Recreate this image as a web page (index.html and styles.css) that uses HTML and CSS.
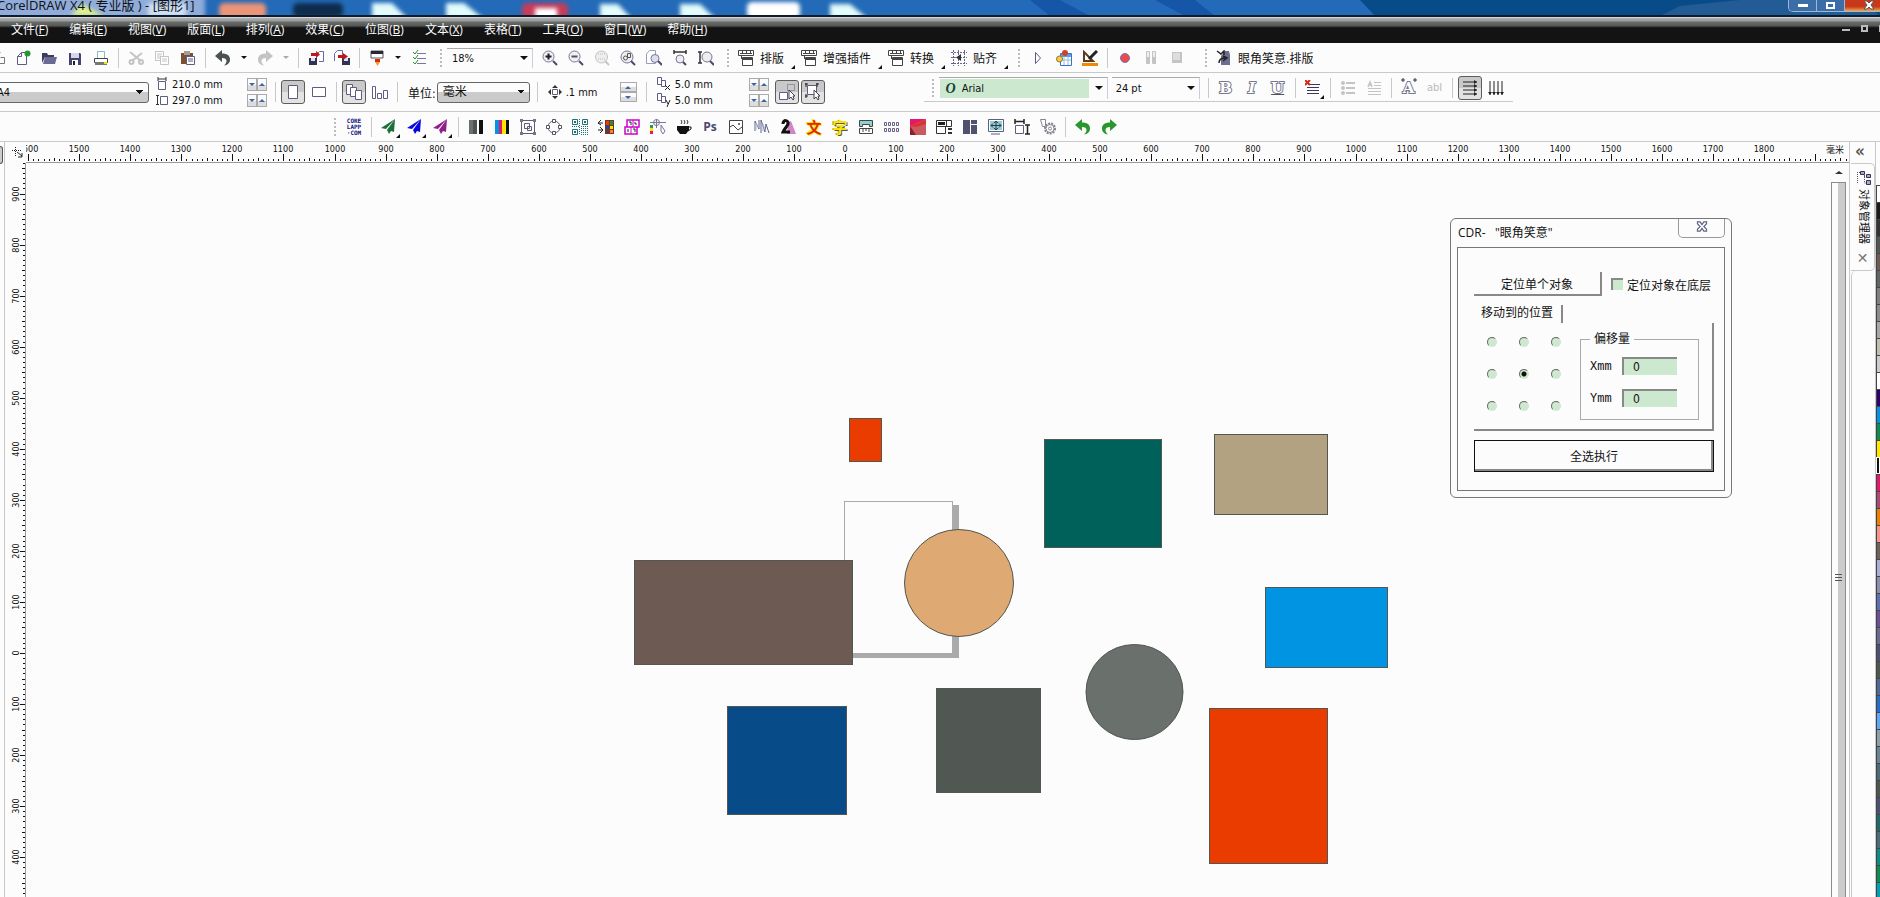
FILE: index.html
```html
<!DOCTYPE html>
<html lang="zh-CN">
<head>
    <meta charset="UTF-8">
    <meta name="viewport" content="width=device-width, initial-scale=1.0">
    <title>CorelDRAW X4</title>
    <link rel="stylesheet" href="styles.css">
</head>
<body>
    <!-- icon sprite -->
    <svg class="sprite" aria-hidden="true">
        <symbol id="clone" viewBox="0 0 16 16"><path d="M10.500 2.500h-5v11h-4M10.500 7.500h4v6h-9" transform="translate(1 0)" fill="none" stroke="#777"/></symbol>
        <symbol id="new" viewBox="0 0 16 16"><path d="M2.500 14.500V6.500l4-4h5v12z" fill="#fff" stroke="#5d5d80"/><path d="M2.500 6.500h4v-4" fill="none" stroke="#5d5d80"/><circle cx="12.500" cy="3.500" r="3" fill="#1f9a2c"/></symbol>
        <symbol id="open" viewBox="0 0 16 16"><path d="M1 13V3h5l1 2h6v2H4z" fill="#3c3c60"/><path d="M4 7h12l-2 7H2z" fill="#6c6c92"/></symbol>
        <symbol id="save" viewBox="0 0 16 16"><path d="M2 3h11l1 1v11H2z" fill="#43436f"/><path d="M4 3h8v5H4z" fill="#d5d5ee"/><path d="M5 10h6v5H5z" fill="#fff"/><path d="M6 11h2v4H6z" fill="#222"/></symbol>
        <symbol id="print" viewBox="0 0 16 16"><path d="M4.500 8V1.500h7V8" fill="#fff" stroke="#8bb"/><path d="M1.500 8.500h13v4h-13z" fill="#fff" stroke="#444"/><path d="M2 12h12v3H2z" fill="#777"/><path d="M11 12h3v2h-3z" fill="#eee000"/></symbol>
        <symbol id="cut" viewBox="0 0 16 16"><g fill="none" stroke="#c4c4c4" stroke-width="2"><path d="M2 2l11 9M14 3L4 11"/><circle cx="3.500" cy="12" r="2"/><circle cx="13" cy="12" r="2"/></g></symbol>
        <symbol id="copy" viewBox="0 0 16 16"><g fill="#fff" stroke="#c4c4c4"><path d="M1.500 1.500h8v9h-8z"/><path d="M6.500 6.500h8v8h-8z"/><path d="M3 4h5M3 6h4M3 8h3M8 9h5M8 11h5"/></g></symbol>
        <symbol id="paste" viewBox="0 0 16 16"><path d="M1 3h12v11H1z" fill="#7a5232"/><path d="M4 1h6v4H4z" fill="#a99"/><path d="M6.500 6.500h8v8h-8z" fill="#fff" stroke="#5d5d80"/><path d="M8 9h5M8 11h5" stroke="#5d5d80"/></symbol>
        <symbol id="undo" viewBox="0 0 16 16"><path d="M7 0v3.500c5 0 8 2 8 6S12 15 9 15.500c2-2 2.500-3 2.500-4.500 0-2-1.500-3-4.500-3V12L0 6z"/></symbol>
        <symbol id="redo" viewBox="0 0 16 16"><path d="M9 0v3.500c-5 0-8 2-8 6S4 15 7 15.500c-2-2-2.500-3-2.500-4.500 0-2 1.500-3 4.500-3V12l7-6z"/></symbol>
        <symbol id="import" viewBox="0 0 16 16"><path d="M8.500 9V4.500l3-3h4v10H11" fill="#fff" stroke="#66a"/><path d="M1 8h8v7H1z" fill="#33334f"/><path d="M3 8h4v3H3z" fill="#ddf"/><path d="M3 3h5V1l4 3.500L8 8V6H3z" fill="#c01818"/></symbol>
        <symbol id="export" viewBox="0 0 16 16"><path d="M.5 11V3.500l3-3h5v10" fill="#fff" stroke="#66a"/><path d="M8 8h8v7H8z" fill="#33334f"/><path d="M10 8h4v3h-4z" fill="#ddf"/><path d="M4 5h5V3l5 3.500L9 10V8H4z" fill="#c01818"/></symbol>
        <symbol id="launch" viewBox="0 0 16 16"><path d="M2 1h12v7H2z" fill="#fff" stroke="#555"/><path d="M2 1h12v3H2z" fill="#26263c"/><path d="M6 9h5v3H6z" fill="#d62a10"/><path d="M6 12h5l-2.500 4z" fill="#ff9b1f"/></symbol>
        <symbol id="checks" viewBox="0 0 16 16"><path d="M6 3.500h9M6 8.500h9M6 13.500h9" stroke="#77779a"/><path d="M2 2l2 2 3-4M2 7l2 2 3-4M2 12l2 2 3-4" fill="none" stroke="#258c2f"/></symbol>
        <symbol id="zoomin" viewBox="0 0 16 16"><circle cx="6.500" cy="6.500" r="5.500" fill="#f1f1f5" stroke="#77779a"/><path d="M11 11l4 4" stroke="#4a4a66" stroke-width="2"/><path d="M3.500 6.500h6M6.500 3.500v6" stroke="#222" stroke-width="2"/></symbol>
        <symbol id="zoomout" viewBox="0 0 16 16"><circle cx="6.500" cy="6.500" r="5.500" fill="#f1f1f5" stroke="#77779a"/><path d="M11 11l4 4" stroke="#4a4a66" stroke-width="2"/><path d="M3.500 6.500h6" stroke="#555" stroke-width="2"/></symbol>
        <symbol id="zoomsel" viewBox="0 0 16 16"><circle cx="7.500" cy="7" r="6" fill="#eee" stroke="#c4c4c4"/><path d="M11 11l4 4" stroke="#c4c4c4" stroke-width="2"/><path d="M4 4h7M4 9h7" stroke="#bbb" stroke-dasharray="1 1"/></symbol>
        <symbol id="zoomall" viewBox="0 0 16 16"><circle cx="7" cy="7" r="6" fill="#eee" stroke="#77779a"/><path d="M11 11l4 4" stroke="#4a4a66" stroke-width="2"/><path d="M7.500 3.500h3v4h-3z" fill="none" stroke="#555"/><circle cx="5.500" cy="8" r="2" fill="none" stroke="#555"/></symbol>
        <symbol id="zoompage" viewBox="0 0 16 16"><path d="M.5 13.500V4l3-3.500h6v13z" fill="#fff" stroke="#9b9bbb"/><circle cx="9" cy="8.500" r="4" fill="#dde" stroke="#77779a"/><path d="M12 11l4 4" stroke="#4a4a66" stroke-width="2"/></symbol>
        <symbol id="zoomw" viewBox="0 0 16 16"><path d="M2 0v4M14 0v4M2 2h12" stroke="#333" stroke-width="1.500"/><circle cx="8" cy="9" r="4" fill="#eee" stroke="#77779a"/><path d="M11 12l3 3" stroke="#4a4a66" stroke-width="2"/></symbol>
        <symbol id="zoomh" viewBox="0 0 16 16"><path d="M0 2h4M0 13h4M2 2v11" stroke="#333" stroke-width="1.500"/><circle cx="9" cy="7" r="5" fill="#eee" stroke="#77779a"/><path d="M12 11l4 4" stroke="#4a4a66" stroke-width="2"/></symbol>
        <symbol id="macro" viewBox="0 0 16 16"><path d="M.5.5h15v5H.5z" fill="#fff" stroke="#444"/><path d="M4.500 0v3M8.500 0v3M12.500 0v3M2 3.500h12M3.500 6v3" stroke="#444"/><path d="M4.500 7.500h10v8h-10z" fill="#fff" stroke="#444"/><path d="M4 9h11" stroke="#444" stroke-width="2"/></symbol>
        <symbol id="snap" viewBox="0 0 16 16"><path d="M0 2.500h16M0 7.500h16M0 13.500h16M2.500 0v16M7.500 0v16M13.500 0v16" stroke="#66668a" stroke-dasharray="2 1"/><path d="M10 4v7L5 7.500z" fill="#333"/></symbol>
        <symbol id="play" viewBox="0 0 16 16"><path d="M5.500 2.500v11l5-5.500z" fill="#fff" stroke="#5d5d80"/></symbol>
        <symbol id="calendar" viewBox="0 0 16 16"><path d="M4.500 3.500h11v12h-11z" fill="#fff" stroke="#3474c8"/><path d="M5 4h10v3H5z" fill="#58a0e8"/><path d="M5 10h10M8 7v8M12 7v8" stroke="#9bd"/><circle cx="3.500" cy="9" r="3" fill="#f0ce52" stroke="#96751d"/><circle cx="9" cy="3" r="3" fill="#d3402a"/></symbol>
        <symbol id="design" viewBox="0 0 16 16"><path d="M2 2v9h9z" fill="none" stroke="#5c3a20" stroke-width="2"/><path d="M15 1L7 9" stroke="#222" stroke-width="3"/><path d="M0 13h16v3H0z" fill="#f08a00"/></symbol>
        <symbol id="record" viewBox="0 0 16 16"><circle cx="8" cy="8" r="4.500" fill="#ea4b4b" stroke="#7474b0"/></symbol>
        <symbol id="pause" viewBox="0 0 16 16"><path d="M3.500 1.500h3v12h-3zM9.500 1.500h3v12h-3z" fill="#eee" stroke="#c4c4c4"/><path d="M4 7h3v7H4zM10 7h3v7h-3z" fill="#c4c4c4"/></symbol>
        <symbol id="stop" viewBox="0 0 16 16"><path d="M3 2h10v11H3z" fill="#c4c4c4"/><path d="M4 3h7v7H4z" fill="#ddd"/></symbol>
        <symbol id="eye" viewBox="0 0 16 16"><path d="M5 15V6l4-5h4l1 4v10z" fill="#6d6d91"/><path d="M1 1l4 3 3-3v4M3 13c0-4 2-5 6-5M7 6l4 2-4 3" fill="none" stroke="#222" stroke-width="1.500"/></symbol>

        <symbol id="pw" viewBox="0 0 12 14"><path d="M2 0v4M10 0v4M2 2h8" stroke="#333"/><path d="M2.500 4.500h7v8h-7z" fill="#fff" stroke="#5d5d80"/></symbol>
        <symbol id="ph" viewBox="0 0 12 14"><path d="M0 2.500h3M0 11.500h3M1.500 2v10" stroke="#333"/><path d="M4.500 3.500h7v8h-7z" fill="#fff" stroke="#5d5d80"/></symbol>
        <symbol id="portrait" viewBox="0 0 16 16"><path d="M3.500 1.500h9v13h-9z" fill="#fff" stroke="#5d5d80"/></symbol>
        <symbol id="landscape" viewBox="0 0 16 16"><path d="M1.500 3.500h13v9h-13z" fill="#fff" stroke="#5d5d80"/></symbol>
        <symbol id="pages" viewBox="0 0 16 16"><g fill="#fff" stroke="#5d5d80"><path d="M.5.5h6v10h-6z"/><path d="M4.500 3.500h6v9h-6z"/><path d="M9.500 6.500h6v9h-6z"/></g></symbol>
        <symbol id="page1" viewBox="0 0 16 16"><path d="M.5 2.500h3v12h-3zM5.500 9.500h4v5h-4zM11.500 6.500h4v8h-4z" fill="#fff" stroke="#5d5d80"/></symbol>
        <symbol id="nudge" viewBox="0 0 14 14"><path d="M4.500 4.500h5v5h-5z" fill="#fff" stroke="#5d5d80"/><path d="M4 3l3-3 3 3zM4 11l3 3 3-3zM3 4L0 7l3 3zM11 4l3 3-3 3z" fill="#333"/></symbol>
        <symbol id="dupx" viewBox="0 0 14 14"><path d="M.5.5h4v7h-4zM4.500 3.500h4v6h-4z" fill="#fff" stroke="#5d5d80"/><path d="M8 8l5 5M13 8l-5 5" stroke="#222"/></symbol>
        <symbol id="dupy" viewBox="0 0 14 14"><path d="M.5.5h4v7h-4zM4.500 3.500h4v6h-4z" fill="#fff" stroke="#5d5d80"/><path d="M9 7l2 4M13 7l-3 7" stroke="#222"/></symbol>
        <symbol id="treat" viewBox="0 0 18 18"><path d="M1.500 9.500h8v7h-8z" fill="#fff" stroke="#5d5d80"/><path d="M9.500 1.500h7v6h-7z" fill="none" stroke="#5d5d80" stroke-dasharray="1 1"/><path d="M11 7v9l2-2 2 3 1-1-1-3h2z" fill="#fff" stroke="#445"/></symbol>
        <symbol id="group-sel" viewBox="0 0 18 18"><path d="M3.500 2.500h9v9h-9z" fill="#fff" stroke="#5d5d80"/><path d="M1 1h3M12 1h3M1 13h3M2 0v4M13 0v4M2 11v4" stroke="#222"/><path d="M10 7v9l2-2 2 3 1-1-1-3h2z" fill="#fff" stroke="#445"/></symbol>
        <symbol id="noalign" viewBox="0 0 16 16"><path d="M3 4.500h12M2 7.500h12M2 10.500h12M2 13.500h12" stroke="#3a3a58"/><path d="M0 0l5 5M5 0L0 5" stroke="#d62a10" stroke-width="2"/></symbol>
        <symbol id="bullets" viewBox="0 0 16 16"><path d="M6 3h9M6 8h9M6 13h9" stroke="#c4c4c4" stroke-width="2"/><circle cx="3" cy="3" r="2" fill="#c4c4c4"/><circle cx="3" cy="8" r="2" fill="#c4c4c4"/><circle cx="3" cy="13" r="2" fill="#c4c4c4"/></symbol>
        <symbol id="dropcap" viewBox="0 0 16 16"><path d="M8 2.500h7M8 5.500h7M2 8.500h13M2 11.500h13M2 14.500h13" stroke="#c4c4c4"/><path d="M2 7l2-5 2 5M3 5h3" fill="none" stroke="#c4c4c4" stroke-width="1.500"/></symbol>
        <symbol id="charfmt" viewBox="0 0 16 16"><path d="M0 2h4M2 0v4M12 2h4M14 0v4" stroke="#33334f"/></symbol>
        <symbol id="htext" viewBox="0 0 18 18"><path d="M2 3h14M2 7h14M2 11h14M2 15h14" stroke="#222"/><path d="M13 1l3 2-3 2zM13 5l3 2-3 2zM13 9l3 2-3 2zM13 13l3 2-3 2z" fill="#222"/></symbol>
        <symbol id="vtext" viewBox="0 0 18 18"><path d="M3 2v14M7 2v14M11 2v14M15 2v14" stroke="#222"/><path d="M1 13l2 3 2-3zM5 13l2 3 2-3zM9 13l2 3 2-3zM13 13l2 3 2-3z" fill="#222"/></symbol>

        <symbol id="plane" viewBox="0 0 16 16"><path d="M14 0L0 9l5 1zM14 0L6 11l2 4 2-3 3 1z"/></symbol>
        <symbol id="bars" viewBox="0 0 16 16"><path d="M1 1h7v14H1z" fill="#6a706d"/><path d="M5 1h4v14H5z" fill="#4d534f"/><path d="M11 1h4v14h-4z" fill="#111"/></symbol>
        <symbol id="cmyk" viewBox="0 0 16 16"><path d="M1 1h4v14H1z" fill="#0094e3"/><path d="M5 1h3v14H5z" fill="#e3186c"/><path d="M8 1h4v14H8z" fill="#ffe600"/><path d="M12 1h3v14h-3z" fill="#111"/></symbol>
        <symbol id="groupbox" viewBox="0 0 16 16"><g fill="none" stroke="#5d5d80"><path d="M1.500 1.500h13v13h-13zM4.500 4.500h5v5h-5zM7.500 7.500h4v4h-4z"/></g><path d="M0 0h3v3H0zM13 0h3v3h-3zM0 13h3v3H0zM13 13h3v3h-3z" fill="#777"/></symbol>
        <symbol id="nodes" viewBox="0 0 16 16"><circle cx="8" cy="8" r="6" fill="none" stroke="#5d5d80"/><g fill="#fff" stroke="#555"><path d="M6.500.5h3v3h-3zM6.500 12.500h3v3h-3zM.5 6.500h3v3h-3zM12.500 6.500h3v3h-3z"/></g></symbol>
        <symbol id="qr" viewBox="0 0 16 16"><g fill="none" stroke="#1a7575"><path d="M.5.5h5v5h-5zM10.500.5h5v5h-5zM.5 10.500h5v5h-5z"/><path d="M7.500 0v16M9 7.500h7M0 7.500h7M9 9.500h7M9 11.500h7M9 13.500h7M9 15.500h7" stroke-dasharray="1 1"/></g><path d="M2 2h2v2H2zM12 2h2v2h-2zM2 12h2v2H2z" fill="#1a7575"/></symbol>
        <symbol id="swap" viewBox="0 0 16 16"><path d="M0 4h5M3 1L0 4l3 2M0 11h5M2 8l3 3-3 3" fill="none" stroke="#222"/><path d="M7 1h9v14H7z" fill="#753622"/><path d="M8 2h3v4H8z" fill="#e83e00"/><path d="M12 2h3v4h-3z" fill="#2a8f38"/><path d="M8 7h3v3H8z" fill="#1a44bd"/><path d="M12 7h3v3h-3z" fill="#ffe200"/><path d="M12 11h3v3h-3z" fill="#f5842a"/></symbol>
        <symbol id="numbers" viewBox="0 0 16 16"><path d="M3 1h12v7H3zM1 8h12v7H1z" fill="#fff" stroke="#d000d0" stroke-width="1.500"/><path d="M9 1v7M7 8v7" stroke="#d000d0"/><path d="M5 3h2v3M11 3v2h2M4 10v3M9 10h2v3" fill="none" stroke="#222"/></symbol>
        <symbol id="guides" viewBox="0 0 16 16"><path d="M0 3.500h16M6.500 0v9" stroke="#77779a"/><circle cx="6.500" cy="3.500" r="3" fill="none" stroke="#77779a"/><path d="M0 6h3v3H0z" fill="#2a9d38"/><path d="M0 9h3v3H0z" fill="#ffe200"/><path d="M0 12h3v3H0z" fill="#e3186c"/><path d="M11 6l4 6-2 3-2-3z" fill="#fff" stroke="#77779a"/></symbol>
        <symbol id="coffee" viewBox="0 0 16 16"><path d="M1 7h12v4l-3 4H4l-3-4z" fill="#111"/><path d="M12 8h3v2l-3 2" fill="none" stroke="#111"/><path d="M5 5l1-2-1-2M8 5l1-2-1-2M11 5l1-2-1-2" fill="none" stroke="#333"/></symbol>
        <symbol id="photo" viewBox="0 0 16 16"><path d="M1.500 1.500h13v13h-13z" fill="#fff" stroke="#444"/><path d="M2 8l3-2 5 5 4-3" fill="none" stroke="#444"/><circle cx="11" cy="5" r="1" fill="#444"/></symbol>
        <symbol id="mirror" viewBox="0 0 16 16"><path d="M1 12V2l4 8V1M7 14V1l4 12 1-8 3 9" fill="none" stroke="#5f6688"/><path d="M2 11V4l3 5M9 12V5l3 8" stroke="#a9b3d4" fill="none"/></symbol>
        <symbol id="two" viewBox="0 0 16 16"><path d="M8 4l3-2 5 13H7z" fill="#ce86c6"/><path d="M3 5c0-5 6-4 5 0-1 3-4 5-5 8h7" fill="none" stroke="#111" stroke-width="3"/></symbol>
        <symbol id="widths" viewBox="0 0 16 16"><path d="M1.500 1.500h13v6h-3v-2h-7v2h-3z" fill="#8fd0d0" stroke="#444"/><path d="M1.500 9.500h13v5h-13z" fill="#fff" stroke="#444"/><path d="M5 10v3M8 10v2M11 10v3" stroke="#444"/></symbol>
        <symbol id="matrix" viewBox="0 0 16 16"><path d="M.5 3.500h2v3h-2zM4.500 3.500h2v3h-2zM8.500 3.500h2v3h-2zM12.500 3.500h2v3h-2zM.5 9.500h2v3h-2zM4.500 9.500h2v3h-2zM8.500 9.500h2v3h-2zM12.500 9.500h2v3h-2z" fill="none" stroke="#6b5f86"/></symbol>
        <symbol id="redbox" viewBox="0 0 16 16"><path d="M0 0h16v16H0z" fill="#c85a62"/><path d="M0 0h16L0 7z" fill="#e3186c"/><path d="M0 7L16 1v4L6 8z" fill="#e0302c"/><path d="M0 7l6 9H0z" fill="#8f1f22"/></symbol>
        <symbol id="panels" viewBox="0 0 16 16"><path d="M.5 1.500h15v6H.5zM.5 7.500h9v7h-9zM10.500 1.500v6" fill="#fff" stroke="#333"/><path d="M2 3h7v3H2z" fill="#222"/><path d="M12 10h4M12 14h4" stroke="#333" stroke-width="2"/></symbol>
        <symbol id="blocks" viewBox="0 0 16 16"><path d="M1 1h7v14H1zM9 1h6v4H9zM9 6h6v9H9z" fill="#50506f"/></symbol>
        <symbol id="screen" viewBox="0 0 16 16"><path d="M.5.5h15v12H.5z" fill="#fff" stroke="#5d5d80"/><path d="M2 2h12v9H2z" fill="#8fd0d0"/><path d="M3 6.500h10M8 2v9M5 4.500L3 6.500l2 2M11 4.500l2 2-2 2M6 4l2-2 2 2M6 9l2 2 2-2" fill="none" stroke="#33334f"/><path d="M3 15h9" stroke="#5d5d80"/></symbol>
        <symbol id="measure" viewBox="0 0 16 16"><path d="M1 0v5M10 0v5M1 2.500h9M11 6h5M11 15h5M13.500 6v9" stroke="#222" stroke-width="1.500"/><path d="M1.500 6.500h8v8h-8z" fill="#fff" stroke="#5d5d80"/></symbol>
        <symbol id="gear" viewBox="0 0 16 16"><circle cx="10" cy="9.500" r="5" fill="none" stroke="#85858f" stroke-width="2" stroke-dasharray="2 1"/><circle cx="10" cy="9.500" r="4" fill="#fff" stroke="#85858f"/><circle cx="10" cy="9.500" r="1.500" fill="none" stroke="#85858f"/><path d="M.5.5h5v7h-3z" fill="#fff" stroke="#85858f"/></symbol>
        <symbol id="tree" viewBox="0 0 16 14"><path d="M2.500 3v10M2 1.500h5M9.500 4v8h3M9 5.500h3" fill="none" stroke="#555" stroke-dasharray="1 1"/><path d="M5.500.5h4v3h-4zM11.500 3.500h4v3h-4zM11.500 9.500h4v4h-4z" fill="#aac" stroke="#335"/></symbol>
        <symbol id="origin" viewBox="0 0 12 12"><path d="M3.500 0v10M0 3.500h10" stroke="#222" stroke-dasharray="1 1"/><path d="M5 5l5 4M10 6v4H6" fill="none" stroke="#222"/></symbol>
    </svg>

    <header class="titlebar">
        <svg class="glass" aria-hidden="true">
            <path d="M1360 0h520v16h-505z" fill="#074c88"/>
            <path d="M1660 16l20-10 60-6h120l20 16z" fill="#235b95"/>
            <path d="M1030 0h30l30 16h-40zM1155 0h40l20 16h-30z" fill="#1656a8"/>
            <g class="glow">
                <rect x="-20" y="-6" width="225" height="26" fill="#8facdb"/>
                <path d="M70 16l12-12 22 12z" fill="#dff28a"/>
                <rect x="148" y="3" width="38" height="14" fill="#cfe0f5"/>
                <rect x="219" y="3" width="47" height="16" rx="5" fill="#ec9478"/>
                <rect x="293" y="3" width="50" height="14" rx="5" fill="#0e2c4c"/>
                <path d="M372 3h20l16 16h-36zM446 3h18l20 16h-38zM600 4h18l14 15h-32zM680 4h20l16 15h-36zM830 4h20l18 15h-38z" fill="#e2fbfb"/>
                <rect x="522" y="3" width="46" height="16" rx="5" fill="#c83c58"/>
                <rect x="535" y="8" width="22" height="12" fill="#fff"/>
                <rect x="747" y="2" width="53" height="17" rx="5" fill="#fff"/>
            </g>
        </svg>
        <h1>CorelDRAW X4 ( 专业版 ) - [图形1]</h1>
        <div class="window-buttons">
            <button type="button" aria-label="最小化"><i class="min"></i></button>
            <button type="button" aria-label="还原"><i class="restore"></i></button>
            <button type="button" class="close" aria-label="关闭"><svg viewBox="0 0 12 9"><path d="M1 0h3l2 2 2-2h3L8 4l3 4H8L6 6 4 8H1l3-4z"/></svg></button>
        </div>
    </header>

    <nav class="menubar">
        <a href="#">文件(<u>F</u>)</a>
        <a href="#">编辑(<u>E</u>)</a>
        <a href="#">视图(<u>V</u>)</a>
        <a href="#">版面(<u>L</u>)</a>
        <a href="#">排列(<u>A</u>)</a>
        <a href="#">效果(<u>C</u>)</a>
        <a href="#">位图(<u>B</u>)</a>
        <a href="#">文本(<u>X</u>)</a>
        <a href="#">表格(<u>T</u>)</a>
        <a href="#">工具(<u>O</u>)</a>
        <a href="#">窗口(<u>W</u>)</a>
        <a href="#">帮助(<u>H</u>)</a>
        <div class="doc-buttons"><i class="min"></i><i class="restore"></i><i class="edge"></i></div>
    </nav>

    <div class="toolbar standard">
        <button type="button" class="tool" aria-label="克隆"><svg><use href="#clone"/></svg></button>
        <button type="button" class="tool" aria-label="新建"><svg><use href="#new"/></svg></button>
        <button type="button" class="tool" aria-label="打开"><svg><use href="#open"/></svg></button>
        <button type="button" class="tool" aria-label="保存"><svg><use href="#save"/></svg></button>
        <button type="button" class="tool" aria-label="打印"><svg><use href="#print"/></svg></button>
        <span class="sep"></span>
        <button type="button" class="tool" aria-label="剪切"><svg><use href="#cut"/></svg></button>
        <button type="button" class="tool" aria-label="复制"><svg><use href="#copy"/></svg></button>
        <button type="button" class="tool" aria-label="粘贴"><svg><use href="#paste"/></svg></button>
        <span class="sep"></span>
        <button type="button" class="tool dark" aria-label="撤消"><svg><use href="#undo"/></svg></button>
        <button type="button" class="drop" aria-label="撤消列表"></button>
        <button type="button" class="tool off" aria-label="重做"><svg><use href="#redo"/></svg></button>
        <button type="button" class="drop off" aria-label="重做列表"></button>
        <span class="sep"></span>
        <button type="button" class="tool" aria-label="导入"><svg><use href="#import"/></svg></button>
        <button type="button" class="tool" aria-label="导出"><svg><use href="#export"/></svg></button>
        <span class="sep"></span>
        <button type="button" class="tool" aria-label="启动器"><svg><use href="#launch"/></svg></button>
        <button type="button" class="drop" aria-label="启动器列表"></button>
        <button type="button" class="tool" aria-label="选项"><svg><use href="#checks"/></svg></button>
        <span class="grip"></span>
        <span class="combo zoom-level"><select aria-label="缩放级别"><option>18%</option></select></span>
        <button type="button" class="tool" aria-label="放大"><svg><use href="#zoomin"/></svg></button>
        <button type="button" class="tool" aria-label="缩小"><svg><use href="#zoomout"/></svg></button>
        <button type="button" class="tool" aria-label="缩放选定"><svg><use href="#zoomsel"/></svg></button>
        <button type="button" class="tool" aria-label="缩放全部"><svg><use href="#zoomall"/></svg></button>
        <button type="button" class="tool" aria-label="缩放页面"><svg><use href="#zoompage"/></svg></button>
        <button type="button" class="tool" aria-label="缩放页宽"><svg><use href="#zoomw"/></svg></button>
        <button type="button" class="tool" aria-label="缩放页高"><svg><use href="#zoomh"/></svg></button>
        <span class="grip"></span>
        <button type="button" class="text-tool more"><svg><use href="#macro"/></svg>排版</button>
        <button type="button" class="text-tool more"><svg><use href="#macro"/></svg>增强插件</button>
        <button type="button" class="text-tool more"><svg><use href="#macro"/></svg>转换</button>
        <button type="button" class="text-tool more"><svg><use href="#snap"/></svg>贴齐</button>
        <span class="grip"></span>
        <button type="button" class="tool" aria-label="运行"><svg><use href="#play"/></svg></button>
        <button type="button" class="tool" aria-label="宏"><svg><use href="#calendar"/></svg></button>
        <button type="button" class="tool" aria-label="设计"><svg><use href="#design"/></svg></button>
        <span class="sep"></span>
        <button type="button" class="tool" aria-label="录制"><svg><use href="#record"/></svg></button>
        <button type="button" class="tool" aria-label="暂停"><svg><use href="#pause"/></svg></button>
        <button type="button" class="tool" aria-label="停止"><svg><use href="#stop"/></svg></button>
        <span class="grip wide"></span>
        <button type="button" class="text-tool"><svg><use href="#eye"/></svg>眼角笑意.排版</button>
    </div>

    <div class="toolbar property">
        <select class="list paper" aria-label="纸张"><option>A4</option></select>
        <div class="pair size">
            <label><svg><use href="#pw"/></svg><input type="text" value="210.0 mm" aria-label="宽度"></label>
            <span class="steps"><button type="button" class="down" aria-label="减"></button><button type="button" class="up" aria-label="加"></button></span>
            <label><svg><use href="#ph"/></svg><input type="text" value="297.0 mm" aria-label="高度"></label>
            <span class="steps"><button type="button" class="down" aria-label="减"></button><button type="button" class="up" aria-label="加"></button></span>
        </div>
        <span class="sep"></span>
        <button type="button" class="tool pressed" aria-label="纵向"><svg><use href="#portrait"/></svg></button>
        <button type="button" class="tool" aria-label="横向"><svg><use href="#landscape"/></svg></button>
        <span class="sep"></span>
        <button type="button" class="tool pressed" aria-label="全部页"><svg><use href="#pages"/></svg></button>
        <button type="button" class="tool" aria-label="当前页"><svg><use href="#page1"/></svg></button>
        <span class="sep"></span>
        <label class="unit">单位: <select class="list"><option>毫米</option></select></label>
        <span class="sep"></span>
        <div class="nudge">
            <label><svg><use href="#nudge"/></svg><input type="text" value=".1 mm" aria-label="微调"></label>
            <span class="steps tall"><button type="button" class="up" aria-label="加"></button><button type="button" class="down" aria-label="减"></button></span>
        </div>
        <span class="sep"></span>
        <div class="pair copy">
            <label><svg><use href="#dupx"/></svg><input type="text" value="5.0 mm" aria-label="X 再制距离"></label>
            <span class="steps"><button type="button" class="down" aria-label="减"></button><button type="button" class="up" aria-label="加"></button></span>
            <label><svg><use href="#dupy"/></svg><input type="text" value="5.0 mm" aria-label="Y 再制距离"></label>
            <span class="steps"><button type="button" class="down" aria-label="减"></button><button type="button" class="up" aria-label="加"></button></span>
        </div>
        <button type="button" class="tool pressed big" aria-label="视为已填充"><svg><use href="#treat"/></svg></button>
        <button type="button" class="tool pressed big" aria-label="框选"><svg><use href="#group-sel"/></svg></button>

        <div class="textbar">
            <span class="grip"></span>
            <span class="combo font-name"><b>O</b><select aria-label="字体"><option>Arial</option></select></span>
            <span class="combo font-size"><select aria-label="字号"><option>24 pt</option></select></span>
            <span class="sep"></span>
            <button type="button" class="tool letter"><b>B</b></button>
            <button type="button" class="tool letter"><i>I</i></button>
            <button type="button" class="tool letter"><u>U</u></button>
            <span class="sep"></span>
            <button type="button" class="tool more" aria-label="对齐"><svg><use href="#noalign"/></svg></button>
            <span class="sep"></span>
            <button type="button" class="tool" aria-label="项目符号"><svg><use href="#bullets"/></svg></button>
            <button type="button" class="tool" aria-label="首字下沉"><svg><use href="#dropcap"/></svg></button>
            <span class="sep"></span>
            <button type="button" class="tool letter format">A<svg><use href="#charfmt"/></svg></button>
            <button type="button" class="tool edit">abI</button>
            <span class="sep"></span>
            <button type="button" class="tool pressed big" aria-label="水平文本"><svg><use href="#htext"/></svg></button>
            <button type="button" class="tool big" aria-label="垂直文本"><svg><use href="#vtext"/></svg></button>
        </div>
    </div>

    <div class="toolbar plugins">
        <span class="grip"></span>
        <button type="button" class="tool core">CORE<br>LAPP<br>·COM</button>
        <span class="sep"></span>
        <button type="button" class="tool more green" aria-label="绿色工具"><svg><use href="#plane"/></svg></button>
        <button type="button" class="tool more blue" aria-label="蓝色工具"><svg><use href="#plane"/></svg></button>
        <button type="button" class="tool more purple" aria-label="紫色工具"><svg><use href="#plane"/></svg></button>
        <span class="sep"></span>
        <button type="button" class="tool" aria-label="灰度"><svg><use href="#bars"/></svg></button>
        <button type="button" class="tool" aria-label="CMYK"><svg><use href="#cmyk"/></svg></button>
        <button type="button" class="tool" aria-label="群组"><svg><use href="#groupbox"/></svg></button>
        <button type="button" class="tool" aria-label="节点"><svg><use href="#nodes"/></svg></button>
        <button type="button" class="tool" aria-label="二维码"><svg><use href="#qr"/></svg></button>
        <button type="button" class="tool" aria-label="替换颜色"><svg><use href="#swap"/></svg></button>
        <button type="button" class="tool" aria-label="编号"><svg><use href="#numbers"/></svg></button>
        <button type="button" class="tool" aria-label="辅助线"><svg><use href="#guides"/></svg></button>
        <button type="button" class="tool" aria-label="咖啡"><svg><use href="#coffee"/></svg></button>
        <button type="button" class="tool ps">Ps</button>
        <button type="button" class="tool" aria-label="位图"><svg><use href="#photo"/></svg></button>
        <button type="button" class="tool" aria-label="镜像"><svg><use href="#mirror"/></svg></button>
        <button type="button" class="tool" aria-label="二"><svg><use href="#two"/></svg></button>
        <button type="button" class="tool wen">文</button>
        <button type="button" class="tool zi">字</button>
        <button type="button" class="tool" aria-label="尺寸"><svg><use href="#widths"/></svg></button>
        <button type="button" class="tool" aria-label="阵列"><svg><use href="#matrix"/></svg></button>
        <button type="button" class="tool" aria-label="填充"><svg><use href="#redbox"/></svg></button>
        <button type="button" class="tool" aria-label="拼版"><svg><use href="#panels"/></svg></button>
        <button type="button" class="tool" aria-label="排列"><svg><use href="#blocks"/></svg></button>
        <button type="button" class="tool" aria-label="适合屏幕"><svg><use href="#screen"/></svg></button>
        <button type="button" class="tool" aria-label="标注"><svg><use href="#measure"/></svg></button>
        <button type="button" class="tool" aria-label="设置"><svg><use href="#gear"/></svg></button>
        <span class="sep"></span>
        <button type="button" class="tool go" aria-label="后退"><svg><use href="#undo"/></svg></button>
        <button type="button" class="tool go" aria-label="前进"><svg><use href="#redo"/></svg></button>
    </div>

    <main class="workspace">
        <div class="toolbox"></div>
        <div class="sheet">
            <div class="corner"><svg><use href="#origin"/></svg></div>
            <svg class="ruler-h" id="rulerH"></svg>
            <svg class="ruler-v" id="rulerV"></svg>
            <div class="canvas">
                <svg class="drawing">
                    <g class="page">
                        <rect x="926" y="342" width="7" height="153" fill="#aaa"/>
                        <rect x="822" y="490" width="111" height="5" fill="#aaa"/>
                        <rect x="818.500" y="338.500" width="108" height="152" fill="#fcfcfc" stroke="#aaa"/>
                    </g>
                    <g class="shapes">
                        <rect x="823.500" y="255.500" width="32" height="43" fill="#eb3c00"/>
                        <rect x="608.500" y="397.500" width="218" height="104" fill="#6d5a53"/>
                        <ellipse cx="933" cy="420" rx="54.500" ry="53.500" fill="#dfa973"/>
                        <rect x="701.500" y="543.500" width="119" height="108" fill="#074c88"/>
                        <rect x="910.500" y="525.500" width="104" height="104" fill="#515752"/>
                        <rect x="1018.500" y="276.500" width="117" height="108" fill="#00615a"/>
                        <rect x="1188.500" y="271.500" width="113" height="80" fill="#b3a282"/>
                        <rect x="1239.500" y="424.500" width="122" height="80" fill="#0094e3"/>
                        <ellipse cx="1108.500" cy="529" rx="48.500" ry="47.500" fill="#6a706b"/>
                        <rect x="1183.500" y="545.500" width="118" height="155" fill="#eb3c00"/>
                    </g>
                </svg>

                <section class="dialog">
                    <div class="dialog-title">
                        <h2>CDR- &nbsp; "眼角笑意"</h2>
                        <button type="button" aria-label="关闭"><svg viewBox="0 0 12 12"><path d="M1 1h3l2 3 2-3h3v2L8 6l3 3v2H8L6 8l-2 3H1V9l3-3-3-3z"/></svg></button>
                    </div>
                    <form class="dialog-body">
                        <div class="row">
                            <button type="button" class="raised">定位单个对象</button>
                            <label><input type="checkbox">定位对象在底层</label>
                        </div>
                        <div class="tab">移动到的位置</div>
                        <div class="panel">
                            <div class="anchors">
                                <input type="radio" name="pos" aria-label="左上">
                                <input type="radio" name="pos" aria-label="上">
                                <input type="radio" name="pos" aria-label="右上">
                                <input type="radio" name="pos" aria-label="左">
                                <input type="radio" name="pos" aria-label="中" checked>
                                <input type="radio" name="pos" aria-label="右">
                                <input type="radio" name="pos" aria-label="左下">
                                <input type="radio" name="pos" aria-label="下">
                                <input type="radio" name="pos" aria-label="右下">
                            </div>
                            <fieldset>
                                <legend>偏移量</legend>
                                <label><span>Xmm</span><input type="text" value="0"></label>
                                <label><span>Ymm</span><input type="text" value="0"></label>
                            </fieldset>
                        </div>
                        <button type="button" class="run">全选执行</button>
                    </form>
                </section>
            </div>
            <div class="scrollbar">
                <div class="arrow"></div>
                <div class="thumb"><i></i></div>
            </div>
        </div>
        <aside class="docker">
            <button type="button" class="collapse">«</button>
            <div class="docker-tab">
                <svg><use href="#tree"/></svg>
                <span>对象管理器</span>
                <button type="button">✕</button>
            </div>
            <div class="docker-rest"></div>
        </aside>
        <div class="palette" id="palette"></div>
    </main>

    <script src="script.js"></script>
</body>
</html>
```
FILE: styles.css
```css
* { box-sizing: border-box; }
body {
    margin: 0;
    height: 100vh;
    display: flex;
    flex-direction: column;
    overflow: hidden;
    background: #fcfcfc;
    color: #111;
    font: 12px "DejaVu Sans Condensed", "Noto Sans CJK SC", sans-serif;
}
button, input, select {
    font: inherit;
    color: inherit;
    margin: 0;
    padding: 0;
    border: 0;
    background: none;
    border-radius: 0;
    appearance: none;
    outline: none;
}
.sprite { position: absolute; width: 0; height: 0; }

/* title bar */
.titlebar {
    position: relative;
    flex: none;
    height: 17px;
    display: flex;
    justify-content: space-between;
    overflow: hidden;
    background: #236ab8;
    border-bottom: 2px solid #0b1c2c;
}
.glass { position: absolute; left: 0; top: 0; width: 100%; height: 15px; }
.glow { filter: blur(2px); }
.titlebar h1 {
    position: relative;
    margin: -5px 0 0 -3px;
    font: 13px/20px "Open Sans", "Noto Sans CJK SC", sans-serif;
    white-space: nowrap;
}
.window-buttons {
    position: relative;
    display: flex;
    height: 12px;
    border: 1px solid #9bb8d8;
    border-top: 0;
    border-right: 0;
    border-radius: 0 0 0 5px;
    overflow: hidden;
}
.window-buttons button {
    width: 28px;
    height: 11px;
    display: flex;
    align-items: center;
    justify-content: center;
    background: #3b6da8;
    border-right: 1px solid #9bb8d8;
}
.window-buttons .close {
    width: 35px;
    padding-left: 12px;
    background: linear-gradient(#c8391c 60%, #f5a83c);
    border: 0;
}
.close svg { width: 12px; height: 9px; fill: #fff; stroke: #555; }
.min { width: 10px; height: 3px; background: #fff; }
.restore { width: 9px; height: 7px; border: 2px solid #fff; }

/* menu */
.menubar {
    flex: none;
    height: 26px;
    display: flex;
    gap: 21px;
    padding: 4px 0 0 11px;
    background: linear-gradient(#fff 0, #b0b0b0 1px, #999 4px, #686e6a 5px, #555 9px, #262626 10px, #131313 11px);
    font: 12px/18px "Open Sans", "Noto Sans CJK SC", sans-serif;
}
.menubar a { color: #fcfcfc; text-decoration: none; white-space: nowrap; }
.doc-buttons { margin-left: auto; display: flex; align-items: center; gap: 11px; height: 14px; }
.doc-buttons .min { width: 8px; height: 2px; background: #bbb; margin-top: 4px; }
.doc-buttons .restore { width: 7px; height: 7px; border-color: #bbb; }
.doc-buttons .edge { width: 1px; height: 7px; background: #bbb; }

/* toolbars */
.toolbar {
    flex: none;
    display: flex;
    align-items: center;
    height: 30px;
    border-bottom: 1px solid #c9c9c9;
    white-space: nowrap;
}
.toolbar > *, .textbar > * { flex: none; }
.standard { margin-left: -16px; }
.sep { width: 1px; height: 20px; margin: 0 4px; background: #c9c9c9; }
.grip { width: 3px; height: 18px; margin: 0 4px 0 8px; border-left: 2px dotted #bbb; }
.grip.wide { margin-left: 15px; }
.tool {
    position: relative;
    width: 26px;
    height: 26px;
    display: flex;
    align-items: center;
    justify-content: center;
}
.tool svg, .text-tool svg { width: 16px; height: 16px; }
.tool.dark { fill: #4c524f; }
.tool.off { fill: #c4c4c4; }
.tool.go { fill: #2a962e; }
.green { fill: #1d7038; }
.blue { fill: #0808dd; }
.purple { fill: #8d2189; }
.more::after {
    content: "";
    position: absolute;
    right: 2px;
    bottom: 2px;
    border: 2px solid #111;
    border-left-color: transparent;
    border-top-color: transparent;
}
.text-tool {
    position: relative;
    height: 26px;
    display: flex;
    align-items: center;
    gap: 6px;
    padding: 0 13px 0 4px;
}
.drop { width: 16px; height: 20px; display: flex; align-items: center; justify-content: center; }
.drop::after, .combo::after {
    content: "";
    border: 4px solid transparent;
    border-top-color: #111;
    border-bottom: 0;
}
.drop::after { border-width: 3px; border-bottom: 0; }
.drop.off::after { border-top-color: #aaa; }
.combo {
    display: flex;
    align-items: center;
    height: 22px;
    padding-right: 4px;
    border-top: 1px solid #aaa;
    border-right: 1px solid #ccccdc;
    font-size: 11px;
}
.combo select { flex: 1; height: 100%; min-width: 0; }
.zoom-level { width: 86px; margin-right: 4px; padding-left: 5px; height: 20px; }

.property { height: 39px; font-size: 11px; }
.list {
    height: 21px;
    padding-left: 5px;
    border: 1px solid #666;
    border-radius: 3px;
    background:
        linear-gradient(135deg, #111 50%, transparent 50%) right 4px center / 4px 4px no-repeat,
        linear-gradient(225deg, #111 50%, transparent 50%) right 8px center / 4px 4px no-repeat,
        linear-gradient(#fcfcfc 50%, #cbcbcb 50%);
}
.paper { width: 158px; margin-left: -9px; }
.pair { display: grid; grid-template-columns: 1fr 20px; row-gap: 2px; align-items: center; }
.pair label, .nudge label { display: flex; align-items: center; gap: 4px; }
.pair svg { width: 12px; height: 14px; }
.pair input { width: 70px; height: 14px; }
.size { width: 111px; margin: 0 4px 0 7px; }
.copy { width: 112px; margin: 0 5px 0 6px; }
.copy svg, .nudge svg { width: 14px; height: 14px; }
.steps { display: flex; justify-content: space-between; }
.steps button {
    width: 10px;
    height: 13px;
    display: flex;
    align-items: center;
    justify-content: center;
    border: 1px solid #aaa;
    background: linear-gradient(#fcfcfc 50%, #ddd 50%);
}
.steps button::after { content: ""; border: 3px solid transparent; }
.steps .up::after { border-bottom-color: #3c66a8; border-top: 0; }
.steps .down::after { border-top-color: #3c66a8; border-bottom: 0; }
.steps.tall { flex-direction: column; }
.steps.tall button { width: 17px; height: 10px; }
.nudge { display: flex; align-items: center; width: 89px; justify-content: space-between; margin: 0 5px 0 6px; }
.nudge input { width: 50px; height: 14px; }
.pressed {
    width: 24px;
    height: 24px;
    border: 1px solid #5c5c5c;
    border-radius: 3px;
    background: linear-gradient(#c9c9c9 50%, #e2e2e2 50%);
    margin: 0 1px;
}
.tool.big svg { width: 18px; height: 18px; }
.unit { display: flex; align-items: center; gap: 1px; margin: 0 3px 0 6px; font-size: 12px; }
.unit .list { width: 93px; }

.textbar {
    display: flex;
    align-items: center;
    height: 28px;
    margin: -8px 0 0 98px;
    padding-right: 4px;
    border-bottom: 1px solid #c9c9c9;
}
.font-name { width: 169px; margin-right: 4px; }
.font-name b {
    align-self: stretch;
    width: 22px;
    margin: 1px 0 1px 1px;
    background: #cce8cf;
    color: #163c3c;
    font: italic bold 14px/19px "Liberation Serif", serif;
    text-align: center;
}
.font-name select { height: 19px; margin-right: 6px; background: #cce8cf; }
.font-size { width: 88px; margin-right: 4px; padding-left: 4px; }
.letter {
    color: #fff;
    font: bold 15px "DejaVu Serif", serif;
    -webkit-text-stroke: 2px #77778f;
    paint-order: stroke fill;
}
.letter u { text-decoration-color: #555; text-decoration-thickness: 1px; }
.format svg { position: absolute; left: 5px; top: 3px; }
.edit { color: #bbb; font: 11px "DejaVu Sans Condensed", sans-serif; }

.plugins { padding-left: 326px; }
.core { color: #10107c; font: bold 6px/6px "DejaVu Sans Mono", monospace; }
.ps { color: #4a4a70; font: bold 12px "Open Sans", sans-serif; }
.wen { color: #e02808; font: bold 15px "Noto Sans CJK SC", sans-serif; text-shadow: 1px 1px #ffe600, -1px -1px #ffe600; }
.zi { color: #ffe600; font: bold 15px "Noto Sans CJK SC", sans-serif; text-shadow: 1px 1px #555, -1px 0 #b89700; }

/* work area */
.workspace { flex: 1; min-height: 0; display: flex; }
.toolbox { width: 5px; border-right: 1px solid #c9c9c9; }
.toolbox::before {
    content: "";
    display: block;
    width: 2px;
    height: 16px;
    margin-top: 4px;
    border: 1px solid #555;
    border-left: 0;
    background: #ccc;
    border-radius: 0 3px 3px 0;
}
.sheet {
    flex: 1;
    min-width: 0;
    display: grid;
    grid-template-columns: 21px 1fr 20px;
    grid-template-rows: 21px 1fr;
}
.corner { padding: 5px 0 0 7px; }
.corner svg { display: block; width: 12px; height: 12px; }
.ruler-h { grid-column: 2 / 4; width: 100%; height: 21px; border-bottom: 1px solid #999; }
.ruler-v { width: 21px; height: 100%; border-right: 1px solid #999; }
.ruler-h text, .ruler-v text { font-size: 9px; text-anchor: middle; fill: #111; }
.ruler-h path, .ruler-v path { stroke: #111; shape-rendering: crispEdges; }
.canvas { position: relative; overflow: hidden; }
.drawing { display: block; width: 100%; height: 100%; }
.shapes { stroke: #515752; }

.scrollbar { display: flex; flex-direction: column; padding: 8px 3px 0 2px; }
.arrow { margin: 0 auto 8px; border: 4px solid transparent; border-top: 0; border-bottom: 3px solid #333; }
.thumb {
    flex: 1;
    display: flex;
    align-items: center;
    justify-content: center;
    padding-top: 74px;
    border: 1px solid #8c8c8c;
    border-bottom: 0;
    background: linear-gradient(90deg, #fcfcfc 50%, #cbcbcb 50%);
}
.thumb i {
    width: 7px;
    height: 7px;
    border: 1px solid #555;
    border-width: 1px 0;
    background: linear-gradient(transparent 2px, #555 2px, #555 3px, transparent 3px);
}

.docker { width: 27px; display: flex; flex-direction: column; border-left: 1px solid #c9c9c9; border-right: 1px solid #c9c9c9; }
.collapse { height: 21px; padding-bottom: 3px; width: 20px; font: bold 17px/16px "DejaVu Sans Condensed", sans-serif; color: #555; }
.docker-tab {
    height: 108px;
    margin-left: 1px;
    padding-top: 7px;
    display: flex;
    flex-direction: column;
    align-items: center;
    border: 1px solid #c9c9c9;
    border-left: 0;
    border-radius: 0 5px 5px 0;
}
.docker-tab svg { width: 16px; height: 14px; }
.docker-tab span {
    margin-top: 4px;
    height: 62px;
    font-size: 11px;
    line-height: 14px;
    writing-mode: vertical-rl;
    text-orientation: sideways;
}
.docker-tab button { font: bold 14px/14px "DejaVu Sans", sans-serif; color: #777; }
.docker-rest { flex: 1; margin-left: 1px; border-left: 1px solid #c9c9c9; border-top-left-radius: 5px; }
.palette { width: 4px; padding-top: 43px; overflow: hidden; }
.palette i { display: block; height: 17px; border: 1px solid #444; border-right: 0; border-bottom: 0; }
.palette i.current { border: 1px solid #fff; outline: 1px solid #111; outline-offset: -2px; }

/* macro dialog */
.dialog {
    position: absolute;
    left: 1424px;
    top: 55px;
    width: 282px;
    padding: 0 6px 6px;
    border: 1px solid #777;
    border-radius: 6px;
    background: #fcfcfc;
}
.dialog-title { display: flex; justify-content: space-between; height: 28px; }
.dialog-title h2 { margin: 4px 0 0 1px; font: 12px/20px "Open Sans", "Noto Sans CJK SC", sans-serif; word-spacing: 0; }
.dialog-title button {
    width: 47px;
    height: 19px;
    border: 1px solid #999;
    border-top: 0;
    border-radius: 0 0 5px 5px;
}
.dialog-title svg { width: 12px; height: 11px; fill: #fff; stroke: #5b6080; stroke-width: 1.2; }
.dialog-body { padding: 24px 10px 18px 16px; border: 1px solid #777; }
.row { display: flex; align-items: center; gap: 9px; }
.raised {
    width: 128px;
    height: 24px;
    border-right: 2px solid #888;
    border-bottom: 2px solid #888;
}
.row label { display: flex; align-items: center; gap: 4px; white-space: nowrap; }
.row input, .dialog input[type="text"] {
    background: #cce8cf;
    border-top: 2px solid #888;
    border-left: 2px solid #888;
}
.row input { width: 12px; height: 12px; }
.tab {
    width: 89px;
    height: 18px;
    margin-top: 9px;
    padding-left: 7px;
    line-height: 16px;
    border-right: 2px solid #888;
}
.panel {
    display: flex;
    align-items: flex-start;
    height: 108px;
    border-right: 2px solid #888;
    border-bottom: 2px solid #888;
}
.anchors {
    display: grid;
    grid-template: repeat(3, 32px) / repeat(3, 32px);
    place-items: center;
    padding: 3px 0 0 2px;
}
.anchors input {
    width: 10px;
    height: 10px;
    border: 1px solid #cce8cf;
    border-top-color: #666;
    border-left-color: #666;
    border-radius: 50%;
    background: #cce8cf;
}
.anchors input:checked { background: radial-gradient(#111 2px, #cce8cf 3px); }
fieldset {
    width: 119px;
    margin: 9px 0 0 8px;
    padding: 11px 0 12px 9px;
    border: 1px solid #aaa;
}
legend { padding: 0 4px; line-height: 14px; }
fieldset label { display: flex; align-items: center; }
fieldset label + label { margin-top: 14px; }
fieldset span { width: 32px; padding-top: 2px; font-family: "Liberation Mono", monospace; }
.dialog input[type="text"] { width: 55px; height: 18px; padding-left: 9px; }
.run {
    width: 100%;
    height: 32px;
    margin-top: 9px;
    padding-bottom: 2px;
    border: 1px solid #111;
    box-shadow: inset -2px -2px #888;
}
```
FILE: script.js
```javascript
const SVG_NS = 'http://www.w3.org/2000/svg';
const STEP = 51.05; // screen pixels per 100 mm

function addLabel(svg, text, x, y, rotate) {
    const el = document.createElementNS(SVG_NS, 'text');
    el.setAttribute('x', x);
    el.setAttribute('y', y);
    if (rotate) el.setAttribute('transform', `rotate(-90 ${x} ${y})`);
    el.textContent = text;
    svg.appendChild(el);
}

function drawRuler(svg, zero, vertical) {
    const length = vertical ? svg.clientHeight : svg.clientWidth;
    let d = '';
    for (let i = -170; i <= 200; i++) {
        const p = Math.round(zero + i * STEP / 10);
        if (p < 0 || p > length - 1) continue;
        const size = i % 10 === 0 ? (vertical ? 5 : 7) : (i % 5 === 0 ? 3 : 2);
        d += vertical ? `M${20 - size} ${p + 0.5}h${size}` : `M${p + 0.5} ${19 - size}v${size}`;
        if (i % 10 === 0 && (vertical || i < 190)) {
            addLabel(svg, Math.abs(i * 10), vertical ? 14 : p, vertical ? p : 10, vertical);
        }
    }
    const path = document.createElementNS(SVG_NS, 'path');
    path.setAttribute('d', d);
    svg.appendChild(path);
    if (!vertical) addLabel(svg, '毫米', length - 14, 11);
}

drawRuler(document.getElementById('rulerH'), 819, false);
drawRuler(document.getElementById('rulerV'), 490, true);

const colors = [
    '#fff', '#1a1a1a', '#333', '#505652', '#6d5a54', '#5f6663', '#808080', '#8c8c8c', '#a8a8a8',
    '#bfbfae', '#ccc', '#fff', '#2d006b', '#0094e3', '#0f8a50', '#ffe600', '#eb3c00', '#e3186c',
    '#a84a73', '#eb8000', '#f79489', '#6b6357', '#a8aed4', '#8c8eb0', '#5d6fb5', '#6b4f95',
    '#6a6a90', '#4d4f73', '#4d564f', '#4f6799', '#256ec5', '#5aa9f5', '#8da0aa', '#6b8494',
    '#4c6a78', '#4d564f', '#4d4f73', '#1f6b69', '#4c6a78', '#0f8a86', '#0f8a50', '#00a0b8'
];
colors.forEach(color => {
    const swatch = document.createElement('i');
    swatch.style.background = color;
    if (color === '#eb3c00') swatch.className = 'current';
    document.getElementById('palette').appendChild(swatch);
});
```
